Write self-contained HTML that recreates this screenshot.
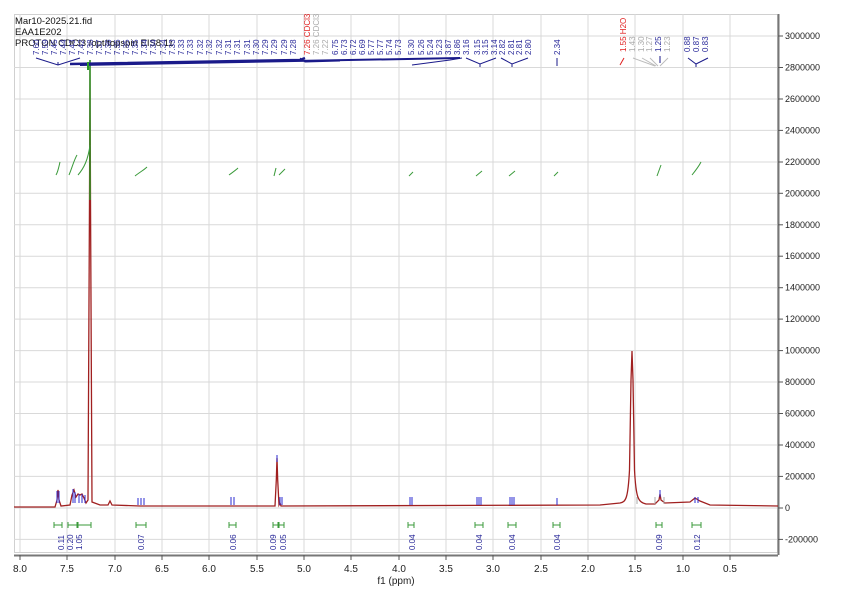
<!DOCTYPE html>
<html><head><meta charset="utf-8"><style>
html,body{margin:0;padding:0;background:#fff;}
svg{display:block;font-family:"Liberation Sans",sans-serif;}
</style></head><body>
<svg width="848" height="599" viewBox="0 0 848 599" xmlns="http://www.w3.org/2000/svg">
<rect width="848" height="599" fill="#fff"/>
<rect x="14.5" y="14.5" width="763" height="538" fill="none" stroke="#d0d0d0"/>
<g stroke="#d9d9d9" stroke-width="1">
<line x1="20" y1="14" x2="20" y2="552"/><line x1="67" y1="14" x2="67" y2="552"/><line x1="115" y1="14" x2="115" y2="552"/><line x1="162" y1="14" x2="162" y2="552"/><line x1="209" y1="14" x2="209" y2="552"/><line x1="257" y1="14" x2="257" y2="552"/><line x1="304" y1="14" x2="304" y2="552"/><line x1="351" y1="14" x2="351" y2="552"/><line x1="399" y1="14" x2="399" y2="552"/><line x1="446" y1="14" x2="446" y2="552"/><line x1="493" y1="14" x2="493" y2="552"/><line x1="541" y1="14" x2="541" y2="552"/><line x1="588" y1="14" x2="588" y2="552"/><line x1="635" y1="14" x2="635" y2="552"/><line x1="683" y1="14" x2="683" y2="552"/><line x1="730" y1="14" x2="730" y2="552"/>
<line x1="14" y1="36" x2="778" y2="36"/><line x1="14" y1="67.5" x2="778" y2="67.5"/><line x1="14" y1="99" x2="778" y2="99"/><line x1="14" y1="130.4" x2="778" y2="130.4"/><line x1="14" y1="162" x2="778" y2="162"/><line x1="14" y1="193.3" x2="778" y2="193.3"/><line x1="14" y1="224.8" x2="778" y2="224.8"/><line x1="14" y1="256.2" x2="778" y2="256.2"/><line x1="14" y1="287.7" x2="778" y2="287.7"/><line x1="14" y1="319.1" x2="778" y2="319.1"/><line x1="14" y1="350.6" x2="778" y2="350.6"/><line x1="14" y1="382" x2="778" y2="382"/><line x1="14" y1="413.5" x2="778" y2="413.5"/><line x1="14" y1="445" x2="778" y2="445"/><line x1="14" y1="476.4" x2="778" y2="476.4"/><line x1="14" y1="508" x2="778" y2="508"/><line x1="14" y1="539.4" x2="778" y2="539.4"/>
</g>
<line x1="778.5" y1="14" x2="778.5" y2="555" stroke="#777" stroke-width="2"/>
<g stroke="#555">
<line x1="778" y1="36" x2="783" y2="36"/><line x1="778" y1="67.5" x2="783" y2="67.5"/><line x1="778" y1="99" x2="783" y2="99"/><line x1="778" y1="130.4" x2="783" y2="130.4"/><line x1="778" y1="162" x2="783" y2="162"/><line x1="778" y1="193.3" x2="783" y2="193.3"/><line x1="778" y1="224.8" x2="783" y2="224.8"/><line x1="778" y1="256.2" x2="783" y2="256.2"/><line x1="778" y1="287.7" x2="783" y2="287.7"/><line x1="778" y1="319.1" x2="783" y2="319.1"/><line x1="778" y1="350.6" x2="783" y2="350.6"/><line x1="778" y1="382" x2="783" y2="382"/><line x1="778" y1="413.5" x2="783" y2="413.5"/><line x1="778" y1="445" x2="783" y2="445"/><line x1="778" y1="476.4" x2="783" y2="476.4"/><line x1="778" y1="508" x2="783" y2="508"/><line x1="778" y1="539.4" x2="783" y2="539.4"/>
</g>
<g font-size="9" fill="#222">
<text x="785" y="39">3000000</text><text x="785" y="70.5">2800000</text><text x="785" y="102">2600000</text><text x="785" y="133.4">2400000</text><text x="785" y="165">2200000</text><text x="785" y="196.3">2000000</text><text x="785" y="227.8">1800000</text><text x="785" y="259.2">1600000</text><text x="785" y="290.7">1400000</text><text x="785" y="322.1">1200000</text><text x="785" y="353.6">1000000</text><text x="785" y="385">800000</text><text x="785" y="416.5">600000</text><text x="785" y="448">400000</text><text x="785" y="479.4">200000</text><text x="785" y="511">0</text><text x="785" y="542.4">-200000</text>
</g>
<line x1="14" y1="555.5" x2="778" y2="555.5" stroke="#777" stroke-width="2"/>
<g stroke="#555">
<line x1="20" y1="555" x2="20" y2="560"/><line x1="67" y1="555" x2="67" y2="560"/><line x1="115" y1="555" x2="115" y2="560"/><line x1="162" y1="555" x2="162" y2="560"/><line x1="209" y1="555" x2="209" y2="560"/><line x1="257" y1="555" x2="257" y2="560"/><line x1="304" y1="555" x2="304" y2="560"/><line x1="351" y1="555" x2="351" y2="560"/><line x1="399" y1="555" x2="399" y2="560"/><line x1="446" y1="555" x2="446" y2="560"/><line x1="493" y1="555" x2="493" y2="560"/><line x1="541" y1="555" x2="541" y2="560"/><line x1="588" y1="555" x2="588" y2="560"/><line x1="635" y1="555" x2="635" y2="560"/><line x1="683" y1="555" x2="683" y2="560"/><line x1="730" y1="555" x2="730" y2="560"/>
</g>
<g font-size="10" fill="#222" text-anchor="middle">
<text x="20" y="572">8.0</text><text x="67" y="572">7.5</text><text x="115" y="572">7.0</text><text x="162" y="572">6.5</text><text x="209" y="572">6.0</text><text x="257" y="572">5.5</text><text x="304" y="572">5.0</text><text x="351" y="572">4.5</text><text x="399" y="572">4.0</text><text x="446" y="572">3.5</text><text x="493" y="572">3.0</text><text x="541" y="572">2.5</text><text x="588" y="572">2.0</text><text x="635" y="572">1.5</text><text x="683" y="572">1.0</text><text x="730" y="572">0.5</text>
<text x="396" y="584">f1 (ppm)</text>
</g>
<g font-size="9.5" fill="#111">
<text x="15" y="24">Mar10-2025.21.fid</text>
<text x="15" y="35">EAA1E202</text>
<text x="15" y="46">PROTON CDCl3 /opt/topspin EIS8 11</text>
</g>
<path d="M14 507 L55 507 L57 500 L58 490 L59 500 L61 506 L70 505 L72 495 L74 490 L76 497 L78 494 L80 495 L82 494 L84 498 L86 503 L88 500 L89.5 200 L90 60 L90.5 200 L92 502 L100 505 L108 505 L110 501 L112 505 L140 506 L275 506 L276.3 480 L277 458 L277.7 480 L279 505 L280 503 L281 506 L600 505 L620 503 C626 502 628 498 629.5 470 L631 380 L632 351 L633 380 L634.5 470 C636 498 638 502 646 504 L655 504 L659 500 L660 494 L661 500 L665 503 L690 502 L695 498 L700 501 L710 505 L778 506" fill="none" stroke="#a02020" stroke-width="1.3"/>
<line x1="90" y1="60" x2="90" y2="200" stroke="#2a9a2a" stroke-width="1.5"/>
<g stroke="#2b2bd0" stroke-width="1">
<line x1="57" y1="491" x2="57" y2="503"/><line x1="59" y1="491" x2="59" y2="503"/><line x1="73" y1="489" x2="73" y2="503"/><line x1="75" y1="492" x2="75" y2="503"/><line x1="79" y1="494" x2="79" y2="503"/><line x1="82" y1="494" x2="82" y2="503"/><line x1="85" y1="495" x2="85" y2="503"/>
<line x1="138" y1="498" x2="138" y2="505"/><line x1="141" y1="498" x2="141" y2="505"/><line x1="144" y1="498" x2="144" y2="505"/>
<line x1="231" y1="497" x2="231" y2="505"/><line x1="234" y1="497" x2="234" y2="505"/>
<line x1="277" y1="455" x2="277" y2="462"/><line x1="280" y1="497" x2="280" y2="505"/><line x1="282" y1="497" x2="282" y2="505"/>
<line x1="410" y1="497" x2="410" y2="505"/><line x1="412" y1="497" x2="412" y2="505"/>
<line x1="477" y1="497" x2="477" y2="505"/><line x1="479" y1="497" x2="479" y2="505"/><line x1="481" y1="497" x2="481" y2="505"/>
<line x1="510" y1="497" x2="510" y2="505"/><line x1="512" y1="497" x2="512" y2="505"/><line x1="514" y1="497" x2="514" y2="505"/>
<line x1="557" y1="498" x2="557" y2="505"/><line x1="660" y1="490" x2="660" y2="497"/><line x1="695" y1="497" x2="695" y2="503"/><line x1="698" y1="497" x2="698" y2="503"/>
</g>
<g stroke="#aaa"><line x1="655" y1="497" x2="655" y2="504"/><line x1="664" y1="497" x2="664" y2="504"/><line x1="637" y1="497" x2="637" y2="504"/></g>
<g stroke="#3a9a3a" stroke-width="1" fill="none">
<path d="M56 175 C58 172 59 166 60 162"/><path d="M69 175 C72 168 74 160 77 155"/><path d="M78 175 C84 168 88 160 90 145"/>
<path d="M135 176 C140 172 144 170 147 167"/><path d="M229 175 C233 172 236 170 238 168"/><path d="M274 176 L276 168"/><path d="M279 175 L285 169"/>
<path d="M409 176 L413 172"/><path d="M476 176 L482 171"/><path d="M509 176 L515 171"/><path d="M554 176 L558 172"/><path d="M657 176 L661 165"/><path d="M692 175 C696 170 699 166 701 162"/>
</g>
<g stroke="#3a9a3a" stroke-width="1">
<path d="M54 522v6M54 525h8M62 522v6"/><path d="M68 522v6M68 525h9M77 522v6"/><path d="M78 522v6M78 525h13M91 522v6"/><path d="M136 522v6M136 525h10M146 522v6"/><path d="M229 522v6M229 525h7M236 522v6"/><path d="M273 522v6M273 525h5M278 522v6"/><path d="M279 522v6M279 525h5M284 522v6"/><path d="M408 522v6M408 525h6M414 522v6"/><path d="M475 522v6M475 525h8M483 522v6"/><path d="M508 522v6M508 525h8M516 522v6"/><path d="M553 522v6M553 525h7M560 522v6"/><path d="M656 522v6M656 525h6M662 522v6"/><path d="M692 522v6M692 525h9M701 522v6"/>
</g>
<g font-size="8" fill="#2a2a9a">
<text transform="translate(64,550) rotate(-90)">0.11</text><text transform="translate(73,550) rotate(-90)">0.20</text><text transform="translate(82,550) rotate(-90)">1.05</text><text transform="translate(144,550) rotate(-90)">0.07</text><text transform="translate(236,550) rotate(-90)">0.06</text><text transform="translate(276,550) rotate(-90)">0.09</text><text transform="translate(286,550) rotate(-90)">0.05</text><text transform="translate(415,550) rotate(-90)">0.04</text><text transform="translate(482,550) rotate(-90)">0.04</text><text transform="translate(515,550) rotate(-90)">0.04</text><text transform="translate(560,550) rotate(-90)">0.04</text><text transform="translate(662,550) rotate(-90)">0.09</text><text transform="translate(700,550) rotate(-90)">0.12</text>
</g>
<g font-size="8" fill="#2a2a9a">
<text transform="translate(39,55) rotate(-90)">7.60</text><text transform="translate(48,55) rotate(-90)">7.59</text><text transform="translate(57,55) rotate(-90)">7.45</text><text transform="translate(66,55) rotate(-90)">7.44</text><text transform="translate(75,55) rotate(-90)">7.43</text><text transform="translate(84,55) rotate(-90)">7.42</text><text transform="translate(93,55) rotate(-90)">7.38</text><text transform="translate(102,55) rotate(-90)">7.37</text><text transform="translate(111,55) rotate(-90)">7.36</text><text transform="translate(120,55) rotate(-90)">7.36</text><text transform="translate(129,55) rotate(-90)">7.35</text><text transform="translate(138,55) rotate(-90)">7.35</text><text transform="translate(147,55) rotate(-90)">7.34</text><text transform="translate(156,55) rotate(-90)">7.34</text><text transform="translate(166,55) rotate(-90)">7.34</text><text transform="translate(175,55) rotate(-90)">7.33</text><text transform="translate(184,55) rotate(-90)">7.33</text><text transform="translate(193,55) rotate(-90)">7.33</text><text transform="translate(203,55) rotate(-90)">7.32</text><text transform="translate(212,55) rotate(-90)">7.32</text><text transform="translate(222,55) rotate(-90)">7.32</text><text transform="translate(231,55) rotate(-90)">7.31</text><text transform="translate(240,55) rotate(-90)">7.31</text><text transform="translate(250,55) rotate(-90)">7.31</text><text transform="translate(259,55) rotate(-90)">7.30</text><text transform="translate(268,55) rotate(-90)">7.29</text><text transform="translate(277,55) rotate(-90)">7.29</text><text transform="translate(287,55) rotate(-90)">7.29</text><text transform="translate(296,55) rotate(-90)">7.28</text>
<text transform="translate(310,55) rotate(-90)" fill="#e02020">7.26 CDCl3</text><text transform="translate(319,55) rotate(-90)" fill="#aaa">7.26 CDCl3</text><text transform="translate(328,55) rotate(-90)" fill="#aaa">7.22</text>
<text transform="translate(338,55) rotate(-90)">6.75</text><text transform="translate(347,55) rotate(-90)">6.73</text><text transform="translate(356,55) rotate(-90)">6.72</text><text transform="translate(365,55) rotate(-90)">6.69</text><text transform="translate(374,55) rotate(-90)">5.77</text><text transform="translate(383,55) rotate(-90)">5.77</text><text transform="translate(392,55) rotate(-90)">5.74</text><text transform="translate(401,55) rotate(-90)">5.73</text><text transform="translate(414,55) rotate(-90)">5.30</text><text transform="translate(424,55) rotate(-90)">5.26</text><text transform="translate(433,55) rotate(-90)">5.24</text><text transform="translate(442,55) rotate(-90)">5.23</text><text transform="translate(451,55) rotate(-90)">3.87</text><text transform="translate(460,55) rotate(-90)">3.86</text>
<text transform="translate(469,55) rotate(-90)">3.16</text><text transform="translate(480,55) rotate(-90)">3.15</text><text transform="translate(488,55) rotate(-90)">3.15</text><text transform="translate(497,55) rotate(-90)">3.14</text><text transform="translate(505,55) rotate(-90)">2.82</text><text transform="translate(514,55) rotate(-90)">2.81</text><text transform="translate(522,55) rotate(-90)">2.81</text><text transform="translate(531,55) rotate(-90)">2.80</text>
<text transform="translate(560,55) rotate(-90)">2.34</text>
<text transform="translate(626,52) rotate(-90)" fill="#e02020">1.55 H2O</text><text transform="translate(635,52) rotate(-90)" fill="#aaa">1.43</text><text transform="translate(644,52) rotate(-90)" fill="#aaa">1.30</text><text transform="translate(652,52) rotate(-90)" fill="#aaa">1.27</text><text transform="translate(661,52) rotate(-90)">1.25</text><text transform="translate(670,52) rotate(-90)" fill="#aaa">1.23</text>
<text transform="translate(690,52) rotate(-90)">0.88</text><text transform="translate(699,52) rotate(-90)">0.87</text><text transform="translate(708,52) rotate(-90)">0.83</text>
</g>
<g stroke="#1a1a8a" stroke-width="1" fill="none">
<path d="M36 58 L58 65 L80 58"/><path d="M58 65 L58 62"/>
<path d="M70 64 L300 60 L305 58" stroke-width="2.5"/>
<path d="M80 65 L460 58" stroke-width="2"/>
<path d="M300 58 L305 62 L340 61"/>
<path d="M412 65 L450 60 L462 58"/>
<path d="M466 58 L480 64 L496 58"/><path d="M480 64 L480 67"/>
<path d="M501 58 L512 64 L528 58"/><path d="M512 64 L512 67"/>
<path d="M557 58 L557 66"/>
<path d="M688 58 L696 64 L708 58"/><path d="M696 64 L696 67"/><path d="M660 56 L660 63"/>
</g>
<path d="M624 58 L620 65" stroke="#e02020" fill="none"/>
<g stroke="#bbb" fill="none"><path d="M633 58 L655 66"/><path d="M642 58 L656 66"/><path d="M650 58 L658 66"/><path d="M668 58 L660 66"/></g>
<path d="M88 62 L88 70" stroke="#2a9a2a" stroke-width="2"/>
</svg>
</body></html>
